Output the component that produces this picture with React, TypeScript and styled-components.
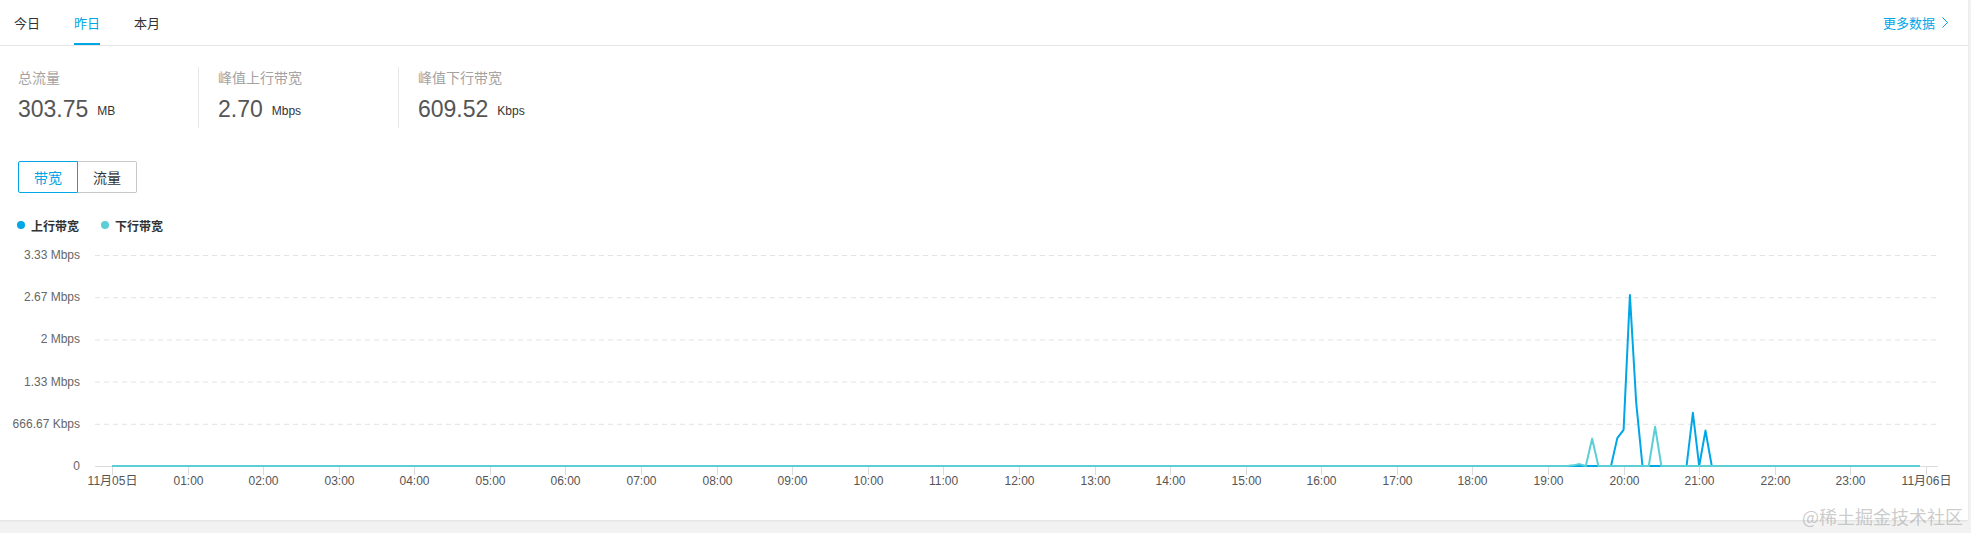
import React from 'react'
import styled, { createGlobalStyle } from 'styled-components'

const BLUE = '#00a6e6'
const TEAL = '#5ccfd6'
const FONT = `"Liberation Sans", "Noto Sans CJK SC", Arial, sans-serif`

const GlobalStyle = createGlobalStyle`
  html, body {
    margin: 0;
    padding: 0;
    background: #f2f2f2;
    font-family: ${FONT};
  }
`

const Page = styled.div`
  position: relative;
  width: 1971px;
  height: 533px;
  padding-right: 3px;
  box-sizing: border-box;
  overflow: hidden;
`

const Card = styled.div`
  background: #fff;
  height: 520px;
  box-shadow: 0 1px 2px rgba(0, 0, 0, 0.08);
`

const Header = styled.div`
  display: flex;
  align-items: center;
  justify-content: space-between;
  height: 45px;
  padding: 0 20px 0 14px;
  border-bottom: 1px solid #e6e6e6;
`

const Tabs = styled.div`
  display: flex;
  align-items: center;
  height: 100%;
`

const Tab = styled.div<{ active?: boolean }>`
  position: relative;
  display: flex;
  align-items: center;
  height: 100%;
  margin-right: 34px;
  font-size: 13px;
  color: ${({ active }) => (active ? BLUE : '#333')};
  cursor: pointer;
  &::after {
    content: '';
    display: ${({ active }) => (active ? 'block' : 'none')};
    position: absolute;
    left: 0;
    right: 0;
    bottom: 0;
    height: 2px;
    background: ${BLUE};
  }
`

const MoreLink = styled.a`
  display: flex;
  align-items: center;
  gap: 7px;
  font-size: 13px;
  color: ${BLUE};
  text-decoration: none;
  cursor: pointer;
`

const Body = styled.div`
  padding-top: 21px;
`

const Stats = styled.div`
  display: flex;
  padding-left: 18px;
`

const Stat = styled.div<{ first?: boolean }>`
  display: flex;
  flex-direction: column;
  box-sizing: border-box;
  height: 61px;
  width: ${({ first }) => (first ? '180px' : '200px')};
  padding-left: ${({ first }) => (first ? '0' : '19px')};
  border-left: ${({ first }) => (first ? 'none' : '1px solid #e8e8e8')};
`

const StatLabel = styled.div`
  font-size: 14px;
  line-height: 22px;
  color: #a3a3a3;
`

const StatValue = styled.div`
  display: flex;
  align-items: baseline;
  line-height: 40px;
  font-size: 23px;
  color: #555;
`

const StatUnit = styled.span`
  font-size: 12px;
  color: #333;
  margin-left: 9px;
  position: relative;
  top: -2px;
`

const Toggle = styled.div`
  display: flex;
  margin: 33px 0 0 18px;
`

const ToggleButton = styled.button<{ active?: boolean; last?: boolean }>`
  box-sizing: border-box;
  width: ${({ last }) => (last ? '59px' : '60px')};
  height: 32px;
  padding: 0;
  font-family: ${FONT};
  font-size: 14px;
  background: #fff;
  color: ${({ active }) => (active ? BLUE : '#333')};
  border: 1px solid ${({ active }) => (active ? BLUE : '#c8c8c8')};
  border-left: ${({ last }) => (last ? 'none' : undefined)};
  border-radius: ${({ last }) => (last ? '0 2px 2px 0' : '2px 0 0 2px')};
  cursor: pointer;
`

const Legend = styled.div`
  display: flex;
  align-items: center;
  height: 16px;
  margin: 24px 0 0 17px;
  gap: 22px;
`

const LegendItem = styled.div`
  display: flex;
  align-items: center;
  gap: 6px;
  font-size: 12px;
  font-weight: bold;
  color: #333;
`

const Dot = styled.span<{ color: string }>`
  width: 8px;
  height: 8px;
  border-radius: 50%;
  background: ${({ color }) => color};
`

const ChartSvg = styled.svg`
  display: block;
  margin-top: 7px;
  font-family: ${FONT};
`

const Watermark = styled.div`
  position: absolute;
  right: 8px;
  top: 503px;
  font-size: 18px;
  color: rgba(160, 160, 160, 0.55);
  font-family: "Noto Sans CJK SC", sans-serif;
  pointer-events: none;
`

// chart geometry, in svg coords (svg top sits at page y 240)
const X0 = 112
const TICK = 75.58
const STEP = TICK / 12
const Y_ZERO = 226
const Y_PER_MBPS = 63.3
const LEFT = 95
const RIGHT = 1938

const yLevels = [
  { label: '3.33 Mbps', v: 3.333 },
  { label: '2.67 Mbps', v: 2.667 },
  { label: '2 Mbps', v: 2 },
  { label: '1.33 Mbps', v: 1.333 },
  { label: '666.67 Kbps', v: 0.6667 },
  { label: '0', v: 0 },
]

const xLabels = [
  '11月05日',
  ...Array.from({ length: 23 }, (_, i) => `${String(i + 1).padStart(2, '0')}:00`),
  '11月06日',
]

const makeSeries = (points: Record<number, number>) =>
  Array.from({ length: 288 }, (_, i) => points[i] ?? 0)

const upload = makeSeries({ 239: 0.44, 240: 0.57, 241: 2.7, 242: 1.0, 251: 0.84, 253: 0.56 })
const download = makeSeries({ 232: 0.01, 233: 0.03, 235: 0.43, 245: 0.62 })

const yOf = (v: number) => Y_ZERO - v * Y_PER_MBPS
const toPath = (data: number[]) =>
  data.map((v, i) => `${i ? 'L' : 'M'}${(X0 + i * STEP).toFixed(2)},${yOf(v).toFixed(2)}`).join('')

function Chart() {
  return (
    <ChartSvg width={1968} height={265} viewBox="0 0 1968 265">
      {yLevels.map((l) => (
        <g key={l.label}>
          <text x={80} y={yOf(l.v) + 4} fontSize={12} fill="#666" textAnchor="end">
            {l.label}
          </text>
          {l.v > 0 && (
            <line
              x1={LEFT}
              x2={RIGHT}
              y1={yOf(l.v) + 0.5}
              y2={yOf(l.v) + 0.5}
              stroke="#e3e3e3"
              strokeDasharray="5 4"
            />
          )}
        </g>
      ))}
      <line x1={LEFT} x2={RIGHT} y1={Y_ZERO + 0.5} y2={Y_ZERO + 0.5} stroke="#dcdcdc" />
      {xLabels.map((label, k) => {
        const x = Math.round(X0 + k * TICK) + 0.5
        return (
          <g key={label}>
            <line x1={x} x2={x} y1={Y_ZERO} y2={Y_ZERO + 9} stroke="#dcdcdc" />
            <text x={x} y={245} fontSize={12} fill="#555" textAnchor="middle">
              {label}
            </text>
          </g>
        )
      })}
      <path d={toPath(upload)} fill="none" stroke={BLUE} strokeWidth={2} strokeLinejoin="round" />
      <path d={toPath(download)} fill="none" stroke={TEAL} strokeWidth={2} strokeLinejoin="round" />
    </ChartSvg>
  )
}

export default function App() {
  return (
    <Page>
      <GlobalStyle />
      <Card>
        <Header>
          <Tabs>
            <Tab>今日</Tab>
            <Tab active>昨日</Tab>
            <Tab>本月</Tab>
          </Tabs>
          <MoreLink>
            更多数据
            <svg width="6" height="11" viewBox="0 0 6 11">
              <path d="M0.5 0.5 L5.5 5.5 L0.5 10.5" fill="none" stroke={BLUE} strokeWidth="1" />
            </svg>
          </MoreLink>
        </Header>
        <Body>
          <Stats>
            <Stat first>
              <StatLabel>总流量</StatLabel>
              <StatValue>
                303.75<StatUnit>MB</StatUnit>
              </StatValue>
            </Stat>
            <Stat>
              <StatLabel>峰值上行带宽</StatLabel>
              <StatValue>
                2.70<StatUnit>Mbps</StatUnit>
              </StatValue>
            </Stat>
            <Stat>
              <StatLabel>峰值下行带宽</StatLabel>
              <StatValue>
                609.52<StatUnit>Kbps</StatUnit>
              </StatValue>
            </Stat>
          </Stats>
          <Toggle>
            <ToggleButton active>带宽</ToggleButton>
            <ToggleButton last>流量</ToggleButton>
          </Toggle>
          <Legend>
            <LegendItem>
              <Dot color={BLUE} />
              上行带宽
            </LegendItem>
            <LegendItem>
              <Dot color={TEAL} />
              下行带宽
            </LegendItem>
          </Legend>
          <Chart />
        </Body>
      </Card>
      <Watermark>@稀土掘金技术社区</Watermark>
    </Page>
  )
}
